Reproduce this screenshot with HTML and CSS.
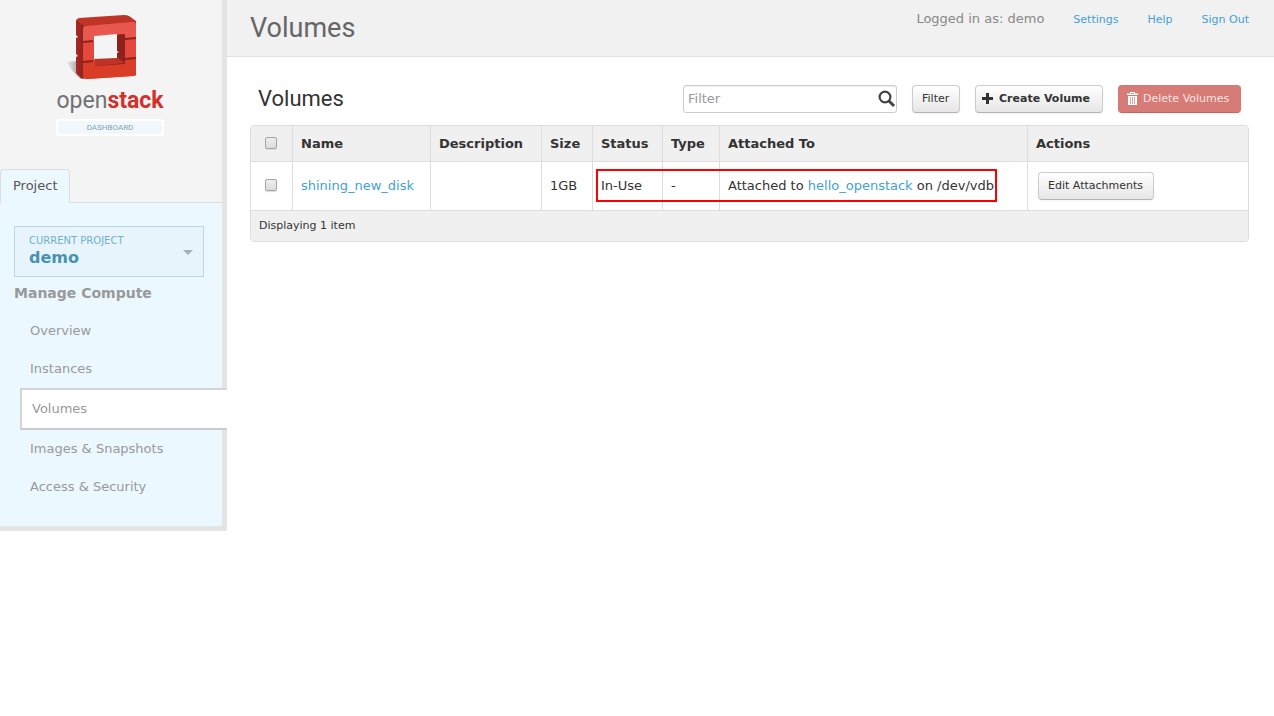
FILE: index.html
```html
<!DOCTYPE html>
<html lang="en">
<head>
<meta charset="utf-8">
<title>Volumes - OpenStack Dashboard</title>
<link rel="stylesheet" href="styles.css">
</head>
<body>
<aside class="sidebar">
  <a class="brand" href="#" aria-label="OpenStack Dashboard">
    <svg class="brand-mark" width="74" height="68" viewBox="0 0 74 68" aria-hidden="true">
      <defs>
        <linearGradient id="shadow" x1="0" x2="1" y1="0" y2="0"><stop offset="0" stop-color="#aaa" stop-opacity=".2"/><stop offset="1" stop-color="#555" stop-opacity=".9"/></linearGradient>
        <linearGradient id="side" x1="0" x2="1" y1="0" y2="0"><stop offset="0" stop-color="#a82b24"/><stop offset="1" stop-color="#8d211c"/></linearGradient>
      </defs>
      <path d="M0 48 L9 47 L18 63 L14 65 Q4 57 0 48Z" fill="url(#shadow)"/>
      <path d="M9 7 Q9 5 12 4 L57 1 Q60 1 62 2 L69 7 L69 13 L17 17Z" fill="#be3427"/>
      <path d="M9 6 L17 12 L17 65 L14 64 L9 59 L9 43 L11 42 L9 40 L9 24 L11 23 L9 21Z" fill="url(#side)"/>
      <path d="M16 15 Q16 12 20 12 L66 8 Q69 8 69 11 L69 60 Q69 62 66 62 L20 65 Q16 65 16 62Z" fill="#e4473b"/>
      <path d="M16 15 Q16 12 20 12 L66 8 Q69 8 69 11 L69 24 L16 28Z" fill="#e9584f"/>
      <path d="M16 48 L69 44 L69 60 Q69 62 66 62 L20 65 Q16 65 16 62Z" fill="#da3d27"/>
      <path d="M28 22 L58 20 L58 50 L28 52Z" fill="#8d211b"/>
      <path d="M28 45 L51 44 L58 49 L28 52Z" fill="#bd3427"/>
      <path d="M27 22 L50 20 L50 37 L52 38 L50 39 L50 44 L27 45Z" fill="#f4f4f4"/>
      <path d="M58 25 L69 24 M16 28 L26 27 M16 48 L26 47 M58 45 L69 44" stroke="#8d211b" stroke-width="2"/>
    </svg>
    <span class="brand-name">open<b>stack</b></span>
    <span class="brand-label">DASHBOARD</span>
  </a>
  <nav class="tabs"><a class="tab" href="#">Project</a></nav>
  <div class="panel">
    <button class="project" type="button">
      <span class="project-text"><span class="project-label">CURRENT PROJECT</span><strong>demo</strong></span>
      <span class="caret"></span>
    </button>
    <h4>Manage Compute</h4>
    <ul class="menu">
      <li><a href="#">Overview</a></li>
      <li><a href="#">Instances</a></li>
      <li><a class="active" href="#" aria-current="page">Volumes</a></li>
      <li><a href="#">Images &amp; Snapshots</a></li>
      <li><a href="#">Access &amp; Security</a></li>
    </ul>
  </div>
</aside>
<main class="main">
  <header class="topbar">
    <h1>Volumes</h1>
    <div class="user">
      <span>Logged in as: demo</span>
      <a href="#">Settings</a>
      <a href="#">Help</a>
      <a href="#">Sign Out</a>
    </div>
  </header>
  <section class="content">
    <div class="toolbar">
      <h2>Volumes</h2>
      <div class="search">
        <input type="text" placeholder="Filter" aria-label="Filter volumes">
        <svg width="18" height="18" viewBox="0 0 18 18" fill="none" stroke="#444" aria-hidden="true"><circle cx="7" cy="7" r="5.4" stroke-width="2.2"/><path d="M11 11 L16 16" stroke-width="3"/></svg>
      </div>
      <button class="btn btn-filter" type="button">Filter</button>
      <button class="btn btn-create" type="button"><svg width="12" height="12" viewBox="0 0 12 12" aria-hidden="true"><path d="M4 0h3v4h4v3H7v4H4V7H0V4h4z" fill="#333"/></svg>Create Volume</button>
      <button class="btn btn-danger" type="button"><svg width="11" height="13" viewBox="0 0 11 13" aria-hidden="true"><path d="M0 1.500h3V0h5v1.500h3V3H0zM4 1v.7h3V1zM1 4h9v9H1z" fill="#fff" fill-rule="evenodd"/><path d="M3.500 5v7M5.500 5v7M7.500 5v7" stroke="#e5a5a2"/></svg>Delete Volumes</button>
    </div>
    <table class="grid">
      <thead>
        <tr>
          <th class="c-check"><input type="checkbox" aria-label="Select all volumes"></th>
          <th class="c-name">Name</th>
          <th class="c-desc">Description</th>
          <th class="c-size">Size</th>
          <th class="c-status">Status</th>
          <th class="c-type">Type</th>
          <th class="c-attached">Attached To</th>
          <th>Actions</th>
        </tr>
      </thead>
      <tbody>
        <tr>
          <td class="c-check"><input type="checkbox" aria-label="Select shining_new_disk"></td>
          <td><a href="#">shining_new_disk</a></td>
          <td></td>
          <td>1GB</td>
          <td class="marked">In-Use<span class="highlight"></span></td>
          <td>-</td>
          <td>Attached to <a href="#">hello_openstack</a> on /dev/vdb</td>
          <td><button class="btn btn-row" type="button">Edit Attachments</button></td>
        </tr>
      </tbody>
      <tfoot>
        <tr><td colspan="8">Displaying 1 item</td></tr>
      </tfoot>
    </table>
  </section>
</main>
</body>
</html>
```
FILE: styles.css
```css
* { box-sizing: border-box; }

body {
  margin: 0;
  display: flex;
  align-items: flex-start;
  background: #fff;
  color: #333;
  font: 13px/18px "DejaVu Sans", sans-serif;
}

a { color: #43a1d6; text-decoration: none; }
h1, h2, h4 { margin: 0; }

.sidebar {
  flex: 0 0 227px;
  background: #f4f4f4;
  border-right: 5px solid #e4e4e4;
  border-bottom: 5px solid #e4e4e4;
}

.brand {
  display: flex;
  flex-direction: column;
  align-items: center;
  height: 169px;
  padding: 14px 2px 0 0;
  color: #707173;
}
.brand-mark { margin-right: 12px; }
.brand-name { font: 23px/37px Roboto, sans-serif; }
.brand-name b { color: #d3302b; }
.brand-label {
  width: 108px;
  border: 2px solid #fff;
  border-radius: 3px;
  background: #f1f8fc;
  color: #7fa3b5;
  font: 8px/13px Roboto, sans-serif;
  text-align: center;
}

.tabs { display: flex; border-bottom: 1px solid #ddd; }
.tab {
  margin-bottom: -1px;
  padding: 7px 12px 8px;
  border: 1px solid #ddd;
  border-bottom: 0;
  border-radius: 4px 4px 0 0;
  background: #ecf8ff;
  color: #555;
}

.panel { background: #ecf8ff; padding: 23px 0 20px; }
.project {
  display: flex;
  align-items: center;
  justify-content: space-between;
  width: 190px;
  height: 51px;
  margin-left: 14px;
  padding: 0 10px 2px 14px;
  border: 1px solid #b9d6e3;
  background: #e8f4fb;
  color: #4693b5;
  font: inherit;
  text-align: left;
}
.project-text { display: flex; flex-direction: column; }
.project-label { color: #6fafca; font-size: 10px; line-height: 14px; }
.project strong { font-size: 16px; line-height: 20px; }
.caret {
  margin-top: 3px;
  border: 5px solid transparent;
  border-top-color: #a6b2b8;
  border-bottom: 0;
}
.panel h4 { padding: 7px 14px 9px; color: #999; font-size: 14px; line-height: 19px; }
.menu { margin: 0; padding: 0; list-style: none; }
.menu a { display: block; padding: 10px 0 10px 30px; color: #999; }
.menu .active {
  margin: 0 -5px 0 20px;
  padding-left: 10px;
  border: 2px solid #d4d4d4;
  border-bottom-color: #c8cccc;
  border-right: 0;
  background: #fff;
}

.main { flex: 1; min-width: 0; }
.topbar {
  display: flex;
  align-items: flex-start;
  justify-content: space-between;
  padding: 10px 25px 10px 23px;
  border-bottom: 1px solid #e0e0e0;
  background: #f1f1f1;
}
.topbar h1 { color: #666; font: 27px/36px Roboto, sans-serif; }
.user { display: flex; align-items: baseline; gap: 29px; color: #888; }
.user a { font-size: 11px; }

.content { padding: 28px 25px 0 23px; }
.toolbar { display: flex; align-items: center; gap: 15px; padding: 0 8px; margin-bottom: 12px; }
.toolbar h2 { margin-right: auto; font: 22px/28px Roboto, sans-serif; }
.search { position: relative; width: 214px; }
.search input {
  display: block;
  width: 100%;
  height: 28px;
  padding: 0 26px 2px 4px;
  border: 1px solid #ccc;
  border-radius: 3px;
  box-shadow: inset 0 1px 1px #eee;
  color: #333;
  font: inherit;
}
.search input::placeholder { color: #999; }
.search svg { position: absolute; right: 1px; top: 5px; }

.btn {
  display: inline-flex;
  align-items: center;
  gap: 5px;
  height: 28px;
  padding: 0 9px 1px;
  border: 1px solid #ccc;
  border-bottom-color: #b3b3b3;
  border-radius: 4px;
  background: linear-gradient(#fff, #e6e6e6);
  box-shadow: 0 1px 2px #0000000d;
  color: #333;
  font: 11px/18px "DejaVu Sans", sans-serif;
}
.btn-filter { min-width: 48px; }
.btn-create { min-width: 128px; padding-left: 6px; font-weight: bold; }
.btn-danger {
  min-width: 123px;
  padding-left: 8px;
  border-color: #d67973 #d67973 #bd6a65;
  background: #d67b76;
  color: #fbe3e2;
}

.grid {
  width: 100%;
  border: 1px solid #ddd;
  border-radius: 4px;
  border-spacing: 0;
  overflow: hidden;
}
.grid th, .grid td {
  height: 36px;
  padding: 0 8px;
  border-left: 1px solid #ddd;
  border-bottom: 1px solid #ddd;
  text-align: left;
}
.grid th { background: #f0f0f0; }
.grid tr > :first-child { border-left: 0; }
.grid tbody td { height: 49px; }
.grid tfoot td { height: 30px; border-bottom: 0; background: #f0f0f0; font-size: 11px; }
.grid .c-check { width: 41px; padding: 0 9px 2px 8px; }
.c-name { width: 138px; }
.c-desc { width: 111px; }
.c-size { width: 51px; }
.c-status { width: 70px; }
.c-type { width: 57px; }
.c-attached { width: 308px; }
.grid input {
  appearance: none;
  display: block;
  width: 12px;
  height: 12px;
  margin: 0 auto;
  border: 1px solid #a5a5a5;
  border-radius: 2px;
  background: linear-gradient(#eee, #dcdcdc);
  box-shadow: 0 1px 1px #ddd;
}
.btn-row { min-width: 116px; margin-left: 2px; }

.marked { position: relative; }
.highlight {
  position: absolute;
  left: 3px;
  top: 7px;
  width: 401px;
  height: 33px;
  border: 2px solid #f00;
}
```
